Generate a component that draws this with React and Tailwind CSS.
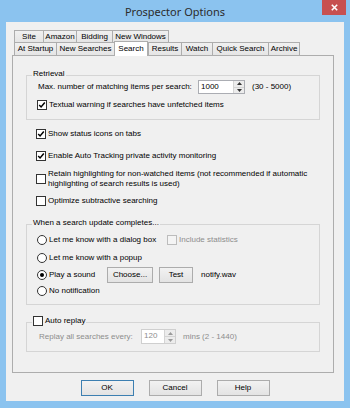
import React from 'react';

const Check = ({ checked, disabled }) => (
  <span
    className={`w-[10px] h-[10px] border flex items-center justify-center shrink-0 ${
      disabled ? 'border-[#bcbcbc] bg-[#f4f4f4]' : 'border-[#333] bg-white'
    }`}
  >
    {checked && (
      <svg width="8" height="8" viewBox="0 0 8 8">
        <path d="M1.2 4 L3.1 6 L6.8 1.6" stroke="#000" strokeWidth="1.5" fill="none" />
      </svg>
    )}
  </span>
);

const Radio = ({ checked }) => (
  <span className="w-[10px] h-[10px] rounded-full border border-[#333] bg-white flex items-center justify-center shrink-0">
    {checked && <span className="w-[4px] h-[4px] rounded-full bg-black" />}
  </span>
);

const Spin = ({ value, className, disabled }) => (
  <div
    className={`h-[14px] border flex bg-white ${disabled ? 'border-[#cfcfcf] text-[#8d8d8d]' : 'border-[#abadb3] text-black'} ${className}`}
  >
    <span className="flex-1 pl-[2px] leading-[12px]">{value}</span>
    <span className="w-[11px] flex flex-col border-l border-[#d4d4d4] bg-[#ececec]">
      <span className="flex-1 flex items-center justify-center border-b border-[#d4d4d4]">
        <svg width="5" height="3" viewBox="0 0 5 3"><path d="M0 3 L2.5 0 L5 3Z" fill={disabled ? '#9a9a9a' : '#333'} /></svg>
      </span>
      <span className="flex-1 flex items-center justify-center">
        <svg width="5" height="3" viewBox="0 0 5 3"><path d="M0 0 L2.5 3 L5 0Z" fill={disabled ? '#9a9a9a' : '#333'} /></svg>
      </span>
    </span>
  </div>
);

const Btn = ({ children, className }) => (
  <button
    className={`h-[16px] border bg-linear-to-b from-[#f2f2f2] to-[#e3e3e3] text-[8px] leading-[14px] text-black ${className}`}
  >
    {children}
  </button>
);

const Group = ({ label, className, children }) => (
  <div className={`relative border border-[#d5d5d5] w-[294px] ${className}`}>
    <div className="absolute -top-[7px] left-[5px] px-[1px] bg-[#f0f0f0] leading-[10px] flex items-center gap-[2px]">
      {label}
    </div>
    {children}
  </div>
);

const CheckRow = ({ checked, children, className }) => (
  <div className={`flex items-center gap-[2px] ml-[10px] ${className}`}>
    <Check checked={checked} />
    <span>{children}</span>
  </div>
);

const row1 = [
  { t: 'Site', w: 'w-[29px]' },
  { t: 'Amazon', w: 'w-[33px]' },
  { t: 'Bidding', w: 'w-[36px]' },
  { t: 'New Windows', w: 'w-[57px] border-r' },
];

const row2 = [
  { t: 'At Startup', w: 'w-[42px]' },
  { t: 'New Searches', w: 'w-[58px]' },
  { t: 'Search', w: 'w-[34px]', sel: true },
  { t: 'Results', w: 'w-[33px]' },
  { t: 'Watch', w: 'w-[31px]' },
  { t: 'Quick Search', w: 'w-[56px]' },
  { t: 'Archive', w: 'w-[32px] border-r' },
];

export default function App() {
  return (
    <div className="w-[350px] h-[408px] bg-[#8bc3ef] flex flex-col font-['Liberation_Sans',Arial,sans-serif] text-[8px] leading-[10px] text-black overflow-hidden">
      <div className="h-[22px] relative flex items-center justify-center shrink-0">
        <span className="font-['Noto_Sans',sans-serif] text-[11px] leading-[14px] text-[#2b2b2b] pt-[1px]">Prospector Options</span>
        <div className="absolute top-0 right-[4px] w-[24px] h-[15px] bg-[#c75050] flex items-center justify-center">
          <svg width="7" height="7" viewBox="0 0 7 7">
            <path d="M0.8 0.8 L6.2 6.2 M6.2 0.8 L0.8 6.2" stroke="#fff" strokeWidth="1.6" />
          </svg>
        </div>
      </div>

      <div className="mx-[6px] h-[379px] bg-[#f0f0f0] shrink-0 flex flex-col">
        <div className="pl-[8px] pt-[8px]">
          <div className="flex h-[12px]">
            {row1.map((tab) => (
              <div key={tab.t} className={`${tab.w} h-[12px] border-l border-t border-[#adadad] bg-linear-to-b from-[#f0f0f0] to-[#e5e5e5] flex items-center justify-center leading-[10px]`}>
                {tab.t}
              </div>
            ))}
          </div>
          <div className="flex items-start h-[13px]">
            {row2.map((tab) =>
              tab.sel ? (
                <div key={tab.t} className={`${tab.w} -mt-[1px] h-[15px] border-l border-t border-r border-[#adadad] bg-white relative z-10 flex items-center justify-center leading-[10px] pb-[1px]`}>
                  {tab.t}
                </div>
              ) : (
                <div key={tab.t} className={`${tab.w} h-[13px] border-l border-t border-[#adadad] bg-linear-to-b from-[#f0f0f0] to-[#e5e5e5] flex items-center justify-center leading-[10px]`}>
                  {tab.t}
                </div>
              )
            )}
          </div>
        </div>

        <div className="ml-[6px] w-[322px] h-[318px] border border-[#adadad] bg-[#f0f0f0] pl-[13px] flex flex-col">
          <Group label="Retrieval" className="mt-[19px] h-[45px] pt-[4px]">
            <div className="flex items-center h-[14px] pl-[11px]">
              <span className="w-[160px]">Max. number of matching items per search:</span>
              <Spin value="1000" className="w-[47px]" />
              <span className="ml-[7px]">(30 - 5000)</span>
            </div>
            <CheckRow checked className="mt-[5px] h-[12px]">Textual warning if searches have unfetched items</CheckRow>
          </Group>

          <CheckRow checked className="mt-[8px] h-[12px]">Show status icons on tabs</CheckRow>
          <CheckRow checked className="mt-[10px] h-[12px]">Enable Auto Tracking private activity monitoring</CheckRow>
          <CheckRow className="mt-[7px] h-[20px]">
            Retain highlighting for non-watched items (not recommended if automatic
            <br />
            highlighting of search results is used)
          </CheckRow>
          <CheckRow className="mt-[6px] h-[12px]">Optimize subtractive searching</CheckRow>

          <Group label="When a search update completes..." className="mt-[17px] h-[81px] pt-[9px]">
            <div className="flex items-center h-[12px] pl-[10px] gap-[2px]">
              <Radio />
              <span className="w-[116px]">Let me know with a dialog box</span>
              <Check disabled />
              <span className="text-[#8d8d8d]">Include statistics</span>
            </div>
            <div className="flex items-center h-[12px] pl-[10px] gap-[2px] mt-[6px]">
              <Radio />
              <span>Let me know with a popup</span>
            </div>
            <div className="flex items-center h-[16px] pl-[10px] mt-[3px]">
              <Radio checked />
              <span className="ml-[2px] w-[58px]">Play a sound</span>
              <Btn className="w-[46px] border-[#acacac]">Choose...</Btn>
              <Btn className="w-[34px] ml-[6px] border-[#acacac]">Test</Btn>
              <span className="ml-[8px]">notify.wav</span>
            </div>
            <div className="flex items-center h-[12px] pl-[10px] gap-[2px] mt-[2px]">
              <Radio />
              <span>No notification</span>
            </div>
          </Group>

          <Group
            label={
              <>
                <Check />
                <span>Auto replay</span>
              </>
            }
            className="mt-[17px] h-[30px] pt-[6px]"
          >
            <div className="flex items-center h-[15px] pl-[12px] text-[#8d8d8d]">
              <span className="w-[102px]">Replay all searches every:</span>
              <Spin value="120" className="w-[35px] h-[15px]" disabled />
              <span className="ml-[7px]">mins (2 - 1440)</span>
            </div>
          </Group>
        </div>

        <div className="flex justify-center gap-[15px] mt-[7px]">
          <Btn className="w-[53px] border-[#3c7fb1]">OK</Btn>
          <Btn className="w-[53px] border-[#acacac]">Cancel</Btn>
          <Btn className="w-[53px] border-[#acacac]">Help</Btn>
        </div>
      </div>
    </div>
  );
}
